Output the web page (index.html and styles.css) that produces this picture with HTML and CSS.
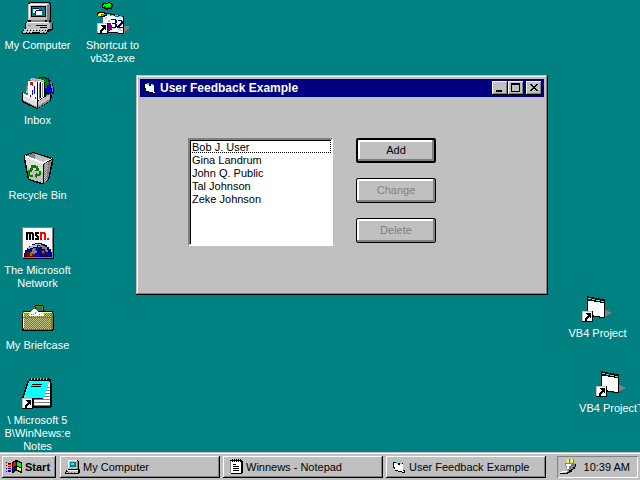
FILE: index.html
```html
<!DOCTYPE html>
<html lang="en">
<head>
    <meta charset="UTF-8">
    <meta name="viewport" content="width=device-width, initial-scale=1.0">
    <title>User Feedback Example</title>
    <link rel="stylesheet" href="styles.css">
</head>
<body>

    <!-- shared icon parts -->
    <svg class="defs" aria-hidden="true">
        <defs>
            <pattern id="dither-olive" width="2" height="2" patternUnits="userSpaceOnUse">
                <path fill="#808000" d="M0 0h2v2H0z"/>
                <path fill="#c0c080" d="M0 0h1v1H0zM1 1h1v1H1z"/>
            </pattern>
            <pattern id="dither-cyan" width="2" height="2" patternUnits="userSpaceOnUse">
                <path fill="#00ffff" d="M0 0h2v2H0z"/>
                <path fill="#c0c0c0" d="M0 0h1v1H0zM1 1h1v1H1z"/>
            </pattern>
            <pattern id="dither-gray" width="2" height="2" patternUnits="userSpaceOnUse">
                <path fill="#c0c0c0" d="M0 0h2v2H0z"/>
                <path fill="#808080" d="M0 0h1v1H0zM1 1h1v1H1z"/>
            </pattern>
        </defs>
        <symbol id="shortcut" viewBox="0 0 11 11">
            <path fill="#000" d="M0 0h11v11H0z"/>
            <path fill="#c0c0c0" d="M0 0h10v10H0z"/>
            <path fill="#fff" d="M1 1h9v9H1z"/>
            <path fill="#000" d="M4 2h5v5H8V6H7v1H6v1H5v2H3V7h1V6h1V5h1V4H5V3H4z"/>
        </symbol>
        <symbol id="project" viewBox="0 0 32 32">
            <path fill="#808080" d="M23 20h2v1h2v1h2v2h-2v1h-2v1h-2z"/>
            <path fill="#000" d="M5 6h2v1h5v1h6v1h5v19h-6v-1h-6v-1H5z"/>
            <path fill="#fff" d="M6 11h6v1h6v1h4v14h-4v-1h-6v-1H6z"/>
            <path fill="#00ffff" d="M6 8h3v1H6zM10 9h3v1h-3zM14 10h4v1h-4zM19 11h3v1h-3z"/>
            <use href="#shortcut" y="21" width="11" height="11"/>
        </symbol>
        <symbol id="form" viewBox="0 0 16 16">
            <path fill="#000" d="M3 3h3v1h6v7h2v3h-3v-1H7v-1H4v-2H3V9H2V3z"/>
            <path fill="#fff" d="M3 4h2v1h2v1h2V5h3v7h1v1h-2v-1H7v-1H4V8H3z"/>
            <path fill="#00ffff" d="M5 3h2v2H5zM9 4h2v1H9z"/>
        </symbol>
    </svg>

    <main class="desktop">
        <div class="icons">
            <a class="icon" href="#">
                <svg viewBox="0 0 32 32">
                    <path fill="#000" d="M7 0h21v1h1v19h-1v1H6V1h1z"/>
                    <path fill="#808080" d="M25 2h3v16h-1v2h-2z"/>
                    <path fill="#c0c0c0" d="M8 1h19l-2 2v15H6V2h2z"/>
                    <path fill="#fff" d="M7 2h18v1H8v14H7z"/>
                    <path fill="#000" d="M9 4h15v11H9z"/>
                    <path fill="#008080" d="M10 5h13v9H10z"/>
                    <path fill="#fff" d="M11 6h6v2h3v5h-6v-2h-3z"/>
                    <path fill="#000080" d="M11 6h6v1h-6zM14 8h6v1h-6zM13 9h1v4h-1z"/>
                    <path fill="#808080" d="M9 18h14v2H9z"/>
                    <path fill="#000" d="M4 20h26v1h1v7h-2v1H3v-8h1z"/>
                    <path fill="#fff" d="M5 20h22v1H5z"/>
                    <path fill="#c0c0c0" d="M4 21h24v6H4z"/>
                    <path fill="#808080" d="M28 20h2v7h-2z"/>
                    <path fill="#00ff00" d="M6 23h3v1H6z"/>
                    <path fill="#000" d="M14 23h11v1H14zM18 25h7v1h-7z"/>
                    <path fill="#000" d="M2 27h25v3h-2v2H0v-3h1v-1h1z"/>
                    <path fill="#c0c0c0" d="M2 27h24v1h-1v2h-1v1H1v-2h1z"/>
                    <path fill="#fff" d="M4 27h1v1H4zM7 27h1v1H7zM10 27h1v1h-1zM13 27h1v1h-1zM16 27h1v1h-1zM19 27h1v1h-1zM22 27h1v1h-1zM3 29h1v1H3zM6 29h1v1H6zM9 29h1v1H9zM20 29h1v1h-1z"/>
                    <path fill="#000" d="M5 28h1v1H5zM8 28h1v1H8zM11 28h1v1h-1zM14 28h1v1h-1zM17 28h1v1h-1zM20 28h1v1h-1zM23 28h1v1h-1zM4 30h1v1H4zM7 30h1v1H7zM10 30h8v1h-8zM21 30h1v1h-1z"/>
                </svg>
                <span>My Computer</span>
            </a>
            <a class="icon" href="#">
                <svg viewBox="0 0 32 32">
                    <path fill="#808080" d="M27 24h5v3h-2v2h-2v2h-3z"/>
                    <path fill="#fff" d="M6 15h2v-2h5v1h5v1h9v16h-6v-1h-9v-3H6z"/>
                    <path fill="#000" d="M9 11h5v1h4v1h5v1h4v18h-6v-1h5V15h-4v-1h-5v-1h-4v-1H9zM11 30h10v1H11z"/>
                    <path fill="#c0c0c0" d="M8 15h2v2H8zM11 18h2v2h-2zM21 26h3v2h-3zM16 25h2v2h-2zM23 28h3v1h-3z"/>
                    <path fill="#00ffff" d="M10 12h3v1h-3zM14 13h3v1h-3zM18 13h3v1h-3zM22 14h3v1h-3z"/>
                    <path fill="#000080" d="M14 17h5v1h1v3h-1v1h1v3h-1v1h-5v-1h4v-3h-3v-1h3v-3h-4zM21 18h4v1h1v3h-1v1h-1v1h-1v1h3v1h-6v-2h1v-1h1v-1h1v-1h1v-2h-3z"/>
                    <path fill="#000" d="M6 1h5V0h2v1h2v1h1v3h-1v2h-4v1H9V7H7V6H5V2h1zM1 10h7v1h2v3H8v1H3v-1H0v-3h1z"/>
                    <path fill="#00ff00" d="M7 2h4V1h2v1h1v3h-1v1H9V5H6V3h1z"/>
                    <path fill="#008000" d="M7 4h2v1H7zM10 5h3v1h-3z"/>
                    <path fill="#ffff00" d="M2 11h5v1H2zM1 12h3v2H1z"/>
                    <path fill="#808000" d="M4 12h5v1H7v1H4z"/>
                    <path fill="#800080" d="M11 21h3v2h1v5h-2v1h-2z"/>
                    <use href="#shortcut" y="21" width="11" height="11"/>
                </svg>
                <span>Shortcut to<br>vb32.exe</span>
            </a>
            <a class="icon" href="#">
                <svg viewBox="0 0 32 32">
                    <path fill="#000080" d="M17 0h7v1h3v2h2v3h2v4h1v7h-2v4h-2v3H17z"/>
                    <path fill="#008000" d="M18 1h5v1h3v3h1v3h-2v3h-2V8h-3zM24 17h4v3h-2v3h-2z"/>
                    <path fill="#0000ff" d="M26 9h2v2h1v4h-6v-4h3z"/>
                    <path fill="#808080" d="M28 4h1v2h1v3h1v6h-1v-4h-1V7h-1z"/>
                    <path fill="#008080" d="M18 2h1v1h-1zM21 3h1v1h-1zM20 5h1v1h-1zM25 5h1v1h-1zM29 16h1v2h-1z"/>
                    <path fill="#c0c0c0" d="M4 9h3v7H4z"/>
                    <path fill="#808080" d="M4 9h1v1h1v2H5v2H4z"/>
                    <path fill="#000" d="M22 5h1v16h-1z"/>
                    <path fill="#fff" d="M6 4h16v17l-7 5-9-4z"/>
                    <path fill="#c0c0c0" d="M7 3l3-2 12 2v3l-4-2-4 1z"/>
                    <path fill="#808080" d="M10 2h1v1h-1zM13 3h1v1h-1zM16 3h1v1h-1zM19 4h1v1h-1zM17 6h1v16h-1zM20 6h1v14h-1z"/>
                    <path fill="#000" d="M15 5h1v19h-1zM18 5h1v16h-1z"/>
                    <path fill="#ff0000" d="M8 5h3v4h-1V8H8z"/>
                    <path fill="#0000ff" d="M8 18h1v5H8zM10 13h1v5h-1zM12 9h1v8h-1zM13 20h1v4h-1z"/>
                    <path fill="#000" d="M0 15l15 9 14-8v8l-14 8L0 25z"/>
                    <path fill="#dfdfdf" d="M1 16l14 8v7L1 24z"/>
                    <path fill="#c0c0c0" d="M16 24l12-7v6l-12 7z"/>
                    <path fill="#fff" d="M1 16l14 7v2L1 18z"/>
                    <path fill="#808080" d="M16 29l12-7v2l-12 7zM1 23l14 7v1L1 24z"/>
                </svg>
                <span>Inbox</span>
            </a>
            <a class="icon" href="#">
                <svg viewBox="0 0 32 32">
                    <path fill="#000" d="M2 3l9-3 20 6v5l-4 17-6 4h-2L6 28 2 9z"/>
                    <path fill="#808080" d="M4 4l7-3 18 6-8 4z"/>
                    <path fill="#c0c0c0" d="M13 2l15 5-6 3-9-2z"/>
                    <path fill="#dfdfdf" d="M3 5l18 7v19L7 27z"/>
                    <path fill="#c0c0c0" d="M5 15l16 5v11L7 27z"/>
                    <path fill="#808080" d="M22 12l8-4-4 20-4 3z"/>
                    <path fill="url(#dither-gray)" d="M22 12l4-2-1 17-3 3z"/>
                    <path fill="#fff" d="M3 3l18 7 9-4v1l-9 5-18-7z"/>
                    <path fill="#008000" d="M9 13h5v1h2v2h1v3h-4v-1h1v-2h-3v2H8v-2h1zM6 18h4v2H8v3h3v2H8v-1H6zM17 19h2v4h-1v1h-3v2h-1v-1h-1v-3h1v-1h1v1h2z"/>
                </svg>
                <span>Recycle Bin</span>
            </a>
            <a class="icon" href="#">
                <svg viewBox="0 0 32 32">
                    <path fill="#000" d="M1 1h31v31H1z"/>
                    <path fill="#808080" d="M0 0h31v31H0z"/>
                    <path fill="#fff" d="M1 1h29v29H1z"/>
                    <path fill="#000" d="M4 5h7v1h1v7h-2V7H9v6H7V7H6v6H4zM13 5h4v2h-2v1h1v1h1v4h-4v-2h2v-1h-1V9h-1z"/>
                    <path fill="#ff0000" d="M18 5h5v1h1v7h-2V7h-2v6h-2zM25 11h2v2h-2z"/>
                    <path fill="#000080" d="M10 17h3v-1h7v1h3v1h2v2h2v2h2v3h1v5H2v-4h1v-3h2v-2h2v-2h3z"/>
                    <path fill="#c0c0c0" d="M10 18h3v-1h6v1h-4v2h-4v1H8v1H6v-2h2v-1h2z"/>
                    <path fill="#00ffff" d="M11 18h3v1h-3zM8 20h2v1H8zM16 19h2v1h-2z"/>
                    <path fill="#808080" d="M18 18h3v1h2v1h2v3h1v2h-3v-3h-3v-2h-2zM10 22h3v1h2v3h-2v2H7v-3h3z"/>
                    <path fill="#800000" d="M5 25h3v1h2v1h3v3H4v-4h1zM19 23h3v1h2v2h2v1h-4v1h-2v-3h-1z"/>
                    <path fill="#808000" d="M8 26h2v3H8zM20 24h2v2h-2zM11 21h3v1h-3z"/>
                    <path fill="#0000ff" d="M23 26h2v1h-2zM14 27h3v3h-3zM26 27h2v2h-2zM14 22h2v2h-2zM3 26h1v3H3z"/>
                </svg>
                <span>The Microsoft<br>Network</span>
            </a>
            <a class="icon" href="#">
                <svg viewBox="0 0 32 32">
                    <path fill="#000" d="M13 3h8v1h1v5h-2V5h-6v4h-2V4h1z"/>
                    <path fill="#808000" d="M13 4h8v1h-8zM12 5h1v4h-1zM20 5h1v4h-1z"/>
                    <path fill="#000" d="M1 9h30v2h1v17h-1v1H0V11h1z"/>
                    <path fill="url(#dither-olive)" d="M1 10h29v17H1z"/>
                    <path fill="#ffff80" d="M2 10h28v1H2zM1 11h1v15H1z"/>
                    <path fill="#fff" d="M7 13l4-6h3l3 4 2-2 3 4v1H7z"/>
                    <path fill="#808080" d="M9 12h1v1H9zM13 10h1v2h-1zM17 12h1v1h-1zM11 12h1v1h-1z"/>
                    <path fill="#808000" d="M1 15h29v1H1zM29 11h2v16h-2zM2 27h28v1H2z"/>
                </svg>
                <span>My Briefcase</span>
            </a>
            <a class="icon" href="#">
                <svg viewBox="0 0 32 32">
                    <path fill="#000" d="M7 2h22v4h1v24h-1v1H9V21H0v-2h1v-3h1v-3h1v-3h1V7h1V4h2z"/>
                    <path fill="#fff" d="M26 5h2v24H12v-7h9z"/>
                    <path fill="#808080" d="M25 10h3v1h-3zM24 13h4v1h-4zM23 16h5v1h-5zM22 19h6v1h-6zM12 22h16v1H12zM12 25h16v1H12zM12 28h16v1H12z"/>
                    <path fill="url(#dither-cyan)" d="M7 4h20v2h-1v3h-1v3h-1v3h-1v3h-1v3H2v-3h1v-3h1v-3h1V9h1V6h1z"/>
                    <path fill="#000" d="M10 7h10v1H10zM9 9h10v1H9zM8 1h1v3H8zM11 1h1v3h-1zM14 1h1v3h-1zM17 1h1v3h-1zM20 1h1v3h-1zM23 1h1v3h-1zM26 1h1v3h-1z"/>
                    <path fill="#c0c0c0" d="M9 1h1v2H9zM12 1h1v2h-1zM15 1h1v2h-1zM18 1h1v2h-1zM21 1h1v2h-1zM24 1h1v2h-1z"/>
                    <use href="#shortcut" y="21" width="11" height="11"/>
                </svg>
                <span>\ Microsoft 5<br>B\WinNews:e<br>Notes</span>
            </a>
        </div>

        <a class="icon loose project-one" href="#">
            <svg viewBox="0 0 32 32"><use href="#project"/></svg>
            <span>VB4 Project</span>
        </a>
        <a class="icon loose project-two" href="#">
            <svg viewBox="0 0 32 32"><use href="#project"/></svg>
            <span>VB4 ProjectT</span>
        </a>

        <section class="window">
            <header class="titlebar">
                <svg class="small-icon" viewBox="0 0 16 16"><use href="#form"/></svg>
                <h1>User Feedback Example</h1>
                <button class="caption" aria-label="Minimize">
                    <svg viewBox="0 0 16 14"><path d="M4 9h6v2H4z"/></svg>
                </button>
                <button class="caption" aria-label="Maximize">
                    <svg viewBox="0 0 16 14"><path d="M3 2h9v9H3zM4 4v6h7V4z" fill-rule="evenodd"/></svg>
                </button>
                <button class="caption close" aria-label="Close">
                    <svg viewBox="0 0 16 14"><path d="M4 3h2v1h1v1h2V4h1V3h2v1h-1v1h-1v1H9v1h1v1h1v1h1v1h-2V9H9V8H7v1H6v1H4V9h1V8h1V7h1V6H6V5H5V4H4z"/></svg>
                </button>
            </header>
            <form class="content">
                <select class="users" size="8" aria-label="Users">
                    <option class="focused">Bob J. User</option>
                    <option>Gina Landrum</option>
                    <option>John Q. Public</option>
                    <option>Tal Johnson</option>
                    <option>Zeke Johnson</option>
                </select>
                <div class="actions">
                    <button type="button" class="command default">Add</button>
                    <button type="button" class="command" disabled>Change</button>
                    <button type="button" class="command" disabled>Delete</button>
                </div>
            </form>
        </section>
    </main>

    <footer class="taskbar">
        <button class="task start">
            <svg class="small-icon" viewBox="0 0 16 16">
                <path fill="#000" d="M6 3h1V2h2V1h3v1h2v1h2v11h-2v-1h-2v-1h-3v1H8v1H6zM0 3h1v1H0zM0 6h1v1H0zM0 9h1v1H0zM0 12h1v1H0zM2 4h3v1H2zM2 12h3v1H2z"/>
                <path fill="#ff0000" d="M7 4h1V3h2v4H8v1H7zM2 5h3v1H2zM2 7h3v1H2z"/>
                <path fill="#00ff00" d="M11 3h2v1h2v4h-2V7h-2z"/>
                <path fill="#0000ff" d="M7 9h1V8h2v3H8v1H7zM2 9h3v1H2zM2 11h3v1H2z"/>
                <path fill="#ffff00" d="M11 8h2v1h2v3h-2v-1h-2z"/>
            </svg>
            <b>Start</b>
        </button>
        <nav class="tasks">
            <button class="task">
                <svg class="small-icon" viewBox="0 0 16 16">
                    <path fill="#000" d="M3 1h10v1h1v8h1v4h-1v1H0v-2h1v-2h2z"/>
                    <path fill="#c0c0c0" d="M3 1h9v9H3z"/>
                    <path fill="#fff" d="M3 1h9v1H4v7H3zM2 11h11v1H2z"/>
                    <path fill="#008080" d="M5 3h6v5H5z"/>
                    <path fill="#00ffff" d="M6 4h3v2H6z"/>
                    <path fill="#c0c0c0" d="M3 12h10v1H3zM1 13h12v1H1z"/>
                    <path fill="#808080" d="M12 2h1v8h-1zM3 13h1v1H3zM6 13h1v1H6zM9 13h1v1H9z"/>
                </svg>
                <span>My Computer</span>
            </button>
            <button class="task">
                <svg class="small-icon" viewBox="0 0 16 16">
                    <path fill="#000" d="M2 1h12v1h1v12h-1v1H3v-1H2z"/>
                    <path fill="#808080" d="M2 2h1v12H2z"/>
                    <path fill="#fff" d="M3 2h10v12H3z"/>
                    <path fill="#000" d="M4 0h1v3H4zM6 0h1v3H6zM8 0h1v3H8zM10 0h1v3h-1zM12 0h1v3h-1zM5 5h3v1H5zM5 7h6v1H5zM5 9h6v1H5zM5 11h6v1H5z"/>
                </svg>
                <span>Winnews - Notepad</span>
            </button>
            <button class="task">
                <svg class="small-icon" viewBox="0 0 16 16"><use href="#form"/></svg>
                <span>User Feedback Example</span>
            </button>
        </nav>
        <div class="tray">
            <svg class="small-icon" viewBox="0 0 16 16">
                <path fill="#808000" d="M9 0h1v4H9zM13 0h1v4h-1z"/>
                <path fill="#ffff00" d="M7 0h2v4H7zM11 0h2v4h-2z"/>
                <path fill="#808080" d="M5 4h10v4h-1v2h-2v1h-2v2H9v1H8v-3H7V9H6V7H5z"/>
                <path fill="#000" d="M15 5h1v3h-1v2h-2v1h-1v2h-2v1H8v1H3v-1h4v-1h2v-2h2v-1h2V8h2z"/>
                <path fill="#fff" d="M6 5h5v2H9v3H7V7H6zM0 13h2v-1h5v1H3v1H0z"/>
                <path fill="#000" d="M0 14h3v1H0z"/>
            </svg>
            <time datetime="10:39">10:39 AM</time>
        </div>
    </footer>

</body>
</html>
```
FILE: styles.css
```css
* {
    box-sizing: border-box;
}

body {
    margin: 0;
    height: 100vh;
    display: flex;
    flex-direction: column;
    overflow: hidden;
    background-color: #008080;
    color: #000;
    font-family: "Liberation Sans", Arial, sans-serif;
    font-size: 11px;
    line-height: 13px;
}

button, select {
    font: inherit;
    color: inherit;
    margin: 0;
}

svg {
    display: block;
    shape-rendering: crispEdges;
}

.defs {
    position: absolute;
    width: 0;
    height: 0;
}

/* desktop */
.desktop {
    position: relative;
    flex: 1;
    min-height: 0;
    padding-top: 2px;
}

.icons {
    display: grid;
    grid-template-columns: 75px 75px;
    grid-auto-rows: 75px;
}

.icons .icon {
    grid-column: 1;
}

.icons .icon:nth-child(2) {
    grid-column: 2;
    grid-row: 1;
}

.icon {
    display: flex;
    flex-direction: column;
    align-items: center;
    gap: 5px;
    color: #fff;
    text-align: center;
    text-decoration: none;
    white-space: nowrap;
}

.icon svg {
    width: 32px;
    height: 32px;
    flex: none;
}

.loose {
    position: absolute;
    width: 75px;
}

.project-one {
    left: 560px;
    top: 290px;
}

.project-two {
    left: 574px;
    top: 365px;
}

/* window */
.window {
    position: absolute;
    left: 136px;
    top: 75px;
    width: 412px;
    height: 220px;
    padding: 4px;
    background-color: #c0c0c0;
    box-shadow: inset -1px -1px #000, inset 1px 1px #c0c0c0, inset -2px -2px #808080, inset 2px 2px #fff;
}

.titlebar {
    display: flex;
    align-items: center;
    height: 18px;
    padding: 0 2px;
    background-color: #000080;
    color: #fff;
}

.titlebar h1 {
    flex: 1;
    margin: 0;
    padding-left: 2px;
    font-size: 12px;
    line-height: 16px;
}

.small-icon {
    width: 16px;
    height: 16px;
    flex: none;
}

.caption {
    width: 16px;
    height: 14px;
    padding: 0;
    border: none;
    background-color: #c0c0c0;
    box-shadow: inset -1px -1px #000, inset 1px 1px #fff, inset -2px -2px #808080;
}

.caption.close {
    margin-left: 2px;
}

.content {
    display: flex;
    align-items: flex-start;
    gap: 23px;
    padding: 41px 48px;
}

.users {
    width: 145px;
    height: 108px;
    padding: 0;
    overflow: hidden;
    border: 2px solid;
    border-color: #808080 #fff #fff #808080;
    border-radius: 0;
    outline: none;
    background-color: #fff;
    box-shadow: inset 1px 1px #000;
}

.users option {
    height: 13px;
    min-height: 13px;
    padding: 1px 2px 0;
    line-height: 13px;
}

.users .focused {
    outline: 1px dotted #000;
    outline-offset: -1px;
}

.actions {
    display: flex;
    flex-direction: column;
    gap: 15px;
}

.command {
    width: 80px;
    height: 25px;
    padding: 0;
    border: 1px solid #000;
    border-radius: 2px;
    background-color: #c0c0c0;
    box-shadow: inset -2px -2px #808080, inset 2px 2px #fff;
}

.command.default {
    border-width: 2px;
}

.command:disabled {
    color: #808080;
}

/* taskbar */
.taskbar {
    display: flex;
    align-items: center;
    gap: 4px;
    height: 28px;
    padding: 4px 2px 2px;
    background-color: #c0c0c0;
    box-shadow: inset 0 1px #c0c0c0, inset 0 2px #fff;
}

.tasks {
    flex: 1;
    display: flex;
    gap: 3px;
    min-width: 0;
}

.task {
    display: flex;
    align-items: center;
    gap: 2px;
    flex: 0 1 160px;
    min-width: 0;
    height: 22px;
    padding: 0 5px;
    border: none;
    background-color: #c0c0c0;
    box-shadow: inset -1px -1px #000, inset 1px 1px #fff, inset -2px -2px #808080;
    white-space: nowrap;
}

.task.start {
    flex: 0 0 54px;
    padding: 0 4px;
    gap: 3px;
}

.tray {
    display: flex;
    align-items: center;
    justify-content: space-between;
    width: 81px;
    height: 22px;
    padding: 0 8px 0 3px;
    box-shadow: inset 1px 1px #808080, inset -1px -1px #fff;
    white-space: nowrap;
}
```
